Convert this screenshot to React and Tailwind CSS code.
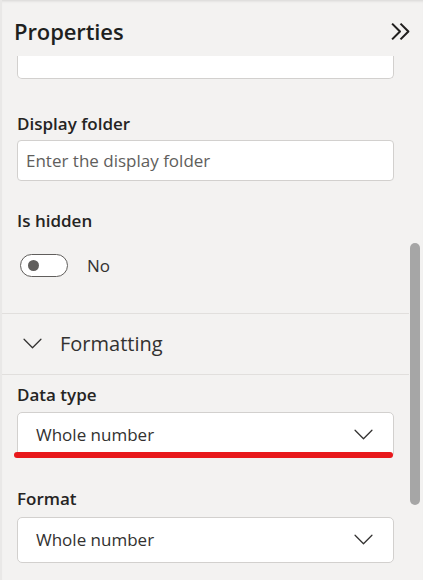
import React from "react";

const FONT = { fontFamily: '"Open Sans", "Noto Sans", sans-serif' };

function Chevron({ className }) {
  return (
    <svg viewBox="0 0 18 10" className={className} fill="none">
      <path d="M1 1l8 8 8-8" stroke="#323130" strokeWidth="1.2" strokeLinecap="round" strokeLinejoin="round" />
    </svg>
  );
}

function Select({ value, underline }) {
  return (
    <div className="relative">
      <div className="h-[46px] bg-white border border-[#d2d0ce] rounded-[5px] flex items-center justify-between pl-[18px] pr-[20px]">
        <span className="text-[17px] text-[#323130]">{value}</span>
        <Chevron className="w-[19px] h-[11px]" />
      </div>
      {underline && (
        <div className="absolute left-[-3px] right-[1px] bottom-[0px] h-[6px] rounded-full bg-[#e8181b]" />
      )}
    </div>
  );
}

function Label({ children, className = "" }) {
  return (
    <div className={`h-[24px] flex items-center text-[17px] font-semibold text-[#252423] ${className}`}>
      {children}
    </div>
  );
}

export default function App() {
  return (
    <div
      style={FONT}
      className="w-[423px] h-[580px] overflow-hidden bg-[#f3f2f1] border-l-2 border-[#e9e8e7] shadow-[inset_0_3px_3px_-2px_rgba(0,0,0,0.12)] flex flex-col"
    >
      <div className="h-[56px] shrink-0 flex items-center justify-between pl-[12px] pr-[12px] pt-[6px]">
        <span className="text-[22px] font-semibold text-[#201f1e] tracking-[-0.1px]">Properties</span>
        <svg viewBox="0 0 20 18" className="w-[21px] h-[19px]" fill="none">
          <path d="M2 1.5l7.5 7.5-7.5 7.5M10 1.5l7.5 7.5-7.5 7.5" stroke="#201f1e" strokeWidth="2" strokeLinejoin="round" />
        </svg>
      </div>

      <div className="flex flex-1 min-h-0">
        <div className="flex-1 flex flex-col">
          <div className="px-[15px]">
            <div className="h-[23px] bg-white border-x border-b border-[#d2d0ce] rounded-b-[5px]" />
            <Label className="mt-[33px]">Display folder</Label>
            <div className="mt-[4px] h-[41px] bg-white border border-[#d2d0ce] rounded-[4px] flex items-center pl-[8px]">
              <span className="text-[17px] text-[#605e5c]">Enter the display folder</span>
            </div>
            <Label className="mt-[28px]">Is hidden</Label>
            <div className="mt-[20px] flex items-center pl-[3px]">
              <div className="w-[48px] h-[23px] rounded-full border border-[#605e5c] bg-white flex items-center pl-[7px]">
                <div className="w-[11px] h-[11px] rounded-full bg-[#605e5c]" />
              </div>
              <span className="ml-[19px] text-[17px] text-[#323130]">No</span>
            </div>
          </div>

          <div className="mt-[34px] border-t border-[#e1dfdd]" />
          <div className="h-[60px] flex items-center pl-[21px]">
            <Chevron className="w-[19px] h-[11px]" />
            <span className="ml-[18px] text-[20px] text-[#323130]">Formatting</span>
          </div>
          <div className="border-t border-[#e1dfdd]" />

          <div className="px-[15px]">
            <Label className="mt-[8px]">Data type</Label>
            <div className="mt-[5px]">
              <Select value="Whole number" underline />
            </div>
            <Label className="mt-[29px]">Format</Label>
            <div className="mt-[6px]">
              <Select value="Whole number" />
            </div>
          </div>
        </div>

        <div className="w-[14px] shrink-0">
          <div className="mt-[187px] ml-[1px] w-[10px] h-[262px] rounded-full bg-[#a6a6a6]" />
        </div>
      </div>
    </div>
  );
}
